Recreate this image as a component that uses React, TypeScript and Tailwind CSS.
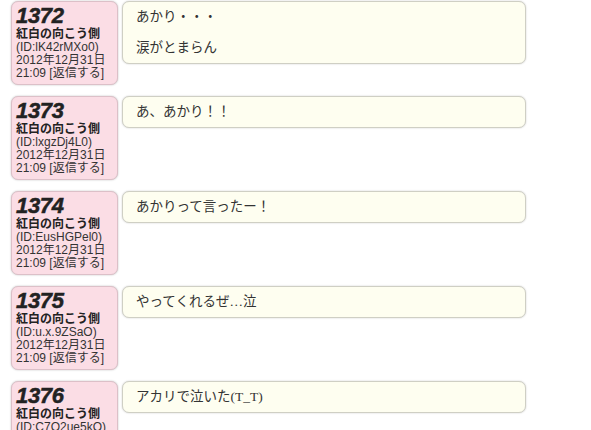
import React from "react";

type Post = { no: number; id: string; lines: string[] };

const posts: Post[] = [
  { no: 1372, id: "lK42rMXo0", lines: ["あかり・・・", "", "涙がとまらん"] },
  { no: 1373, id: "lxgzDj4L0", lines: ["あ、あかり！！"] },
  { no: 1374, id: "EusHGPel0", lines: ["あかりって言ったー！"] },
  { no: 1375, id: "u.x.9ZSaO", lines: ["やってくれるぜ…泣"] },
  { no: 1376, id: "C7O2ue5kO", lines: ["アカリで泣いた(T_T)"] },
];

const sans = "font-['Liberation_Sans','Noto_Sans_CJK_JP',sans-serif]";
const serif = "font-['Liberation_Serif','Noto_Sans_CJK_JP',serif]";

function PostRow({ p }: { p: Post }) {
  return (
    <div className="flex items-start gap-[4px] pl-[11px] mb-[11px]">
      <div
        className={`w-[107px] h-[84px] shrink-0 rounded-[7px] border border-[#dcc0c8] bg-[#fbdde5] shadow-[0_0_2px_rgba(0,0,0,0.25)] pl-[4px] pt-[2px] text-[#333] ${sans}`}
      >
        <div className="text-[22px] leading-[24px] font-bold italic text-[#222] tracking-[-0.3px] [-webkit-text-stroke:0.5px_#222]">
          {p.no}
        </div>
        <div className="text-[12px] leading-[13px] font-bold text-[#222]">紅白の向こう側</div>
        <div className="text-[12px] leading-[13px]">(ID:{p.id})</div>
        <div className="text-[12px] leading-[13px]">2012年12月31日</div>
        <div className="text-[12px] leading-[13px]">21:09 [返信する]</div>
      </div>
      <div
        className={`w-[404px] shrink-0 rounded-[7px] border border-[#cfcfc4] bg-[#fefef0] shadow-[0_0_2px_rgba(0,0,0,0.2)] px-[13px] py-[7px] text-[13.5px] leading-[15.5px] text-[#333] ${serif}`}
      >
        {p.lines.map((l, i) => (
          <div key={i} className="h-[15.5px] whitespace-nowrap">
            {l}
          </div>
        ))}
      </div>
    </div>
  );
}

export default function App() {
  return (
    <div className="w-[591px] h-[430px] overflow-hidden bg-white pt-[1px]">
      {posts.map((p) => (
        <PostRow key={p.no} p={p} />
      ))}
    </div>
  );
}
